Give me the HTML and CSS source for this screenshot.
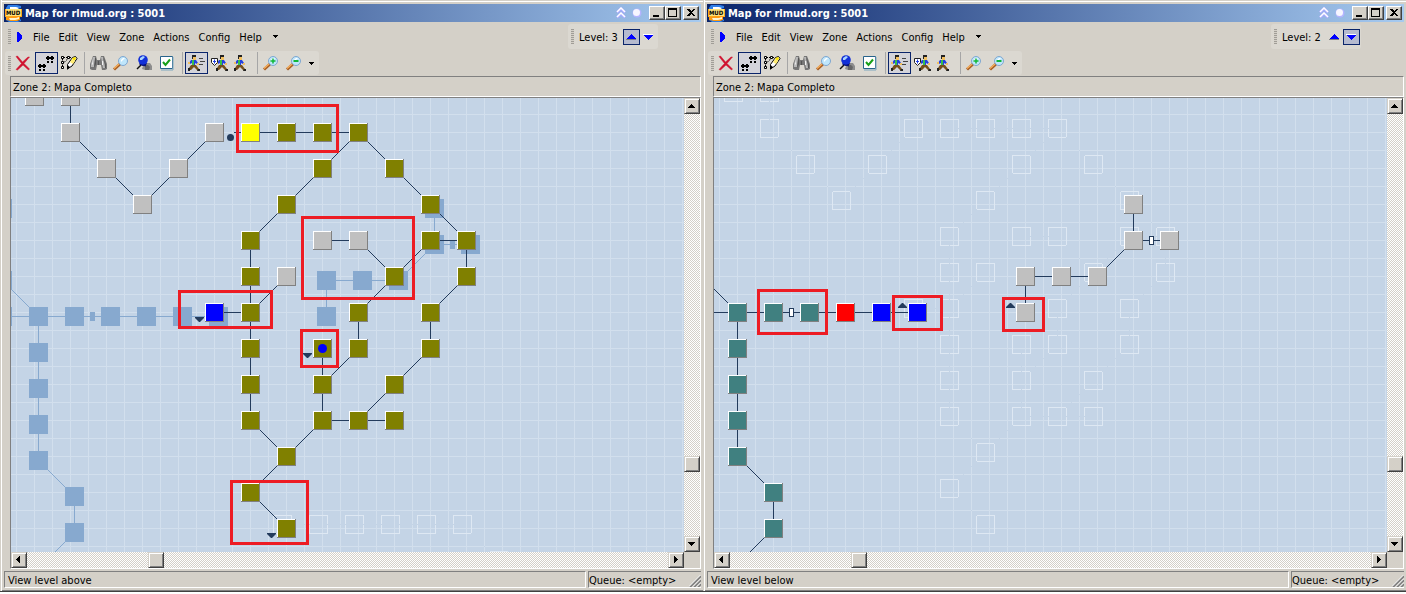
FILE: index.html
```html
<!DOCTYPE html>
<html lang="en">
<head>
<meta charset="utf-8">
<title>Map for rlmud.org : 5001</title>
<link rel="stylesheet" href="styles.css">
</head>
<body>
<svg class="sprites" aria-hidden="true">
  <symbol id="i-logo" viewBox="0 0 17 17">
    <path d="M3 0h9l4 1v2l-4 1H6L4 5H1V3z" fill="#2f7fe8"/>
    <path d="M5 2h6l3 1-3 2H5z" fill="#fff"/>
    <path d="M0 4h17v8H0z" fill="#f9a81a"/>
    <path d="M1 4h15v7H1z" fill="#ffe27a"/>
    <path d="M1 12h4l2-1h8v4l-3 1H4l-3-1z" fill="#ff9c12"/>
    <path d="M4 13h7l3-1v2l-4 1H5z" fill="#fff3d0"/>
    <path d="M1 15l5 1h8l2-2v2l-3 1H4z" fill="#2f7fe8"/>
  </symbol>
  <symbol id="i-delete" viewBox="0 0 16 16">
    <path d="M1 1.500l1.500-.5L7.500 7 13 2l1.500 0L9 8.500l5.500 5.500-1 1L8 10l-5.500 5-1.500-.5L6.500 8.500z" fill="#d0122f" stroke="#d0122f" stroke-width=".5"/>
  </symbol>
  <symbol id="i-feet" viewBox="0 0 16 16">
    <path d="M9 1h2v1h1v2h-1v1H9V4H8V2h1zM13 1h2v1h1v2h-1v1h-2V4h-1V2h1zM9 6h2v2H9zM13 6h2v2h-2z"/>
    <path d="M1 9h2v1h1v2H3v1H1v-1H0v-2h1zM5 9h2v1h1v2H7v1H5v-1H4v-2h1zM1 14h2v2H1zM5 14h2v2H5z"/>
  </symbol>
  <symbol id="i-edit" viewBox="0 0 17 16">
    <path d="M1.500 3.500v10M2 2.500h9M6.500 4l-5 5" stroke="#000" stroke-dasharray="2 1" fill="none"/>
    <path d="M.5 1.500h2v2h-2zM6.500 1.500h2v2h-2zM.5 6.500h2v2h-2zM.5 11.500h2v2h-2z" fill="#fff" stroke="#000"/>
    <path d="M6.500 9.500l5-7 3-1 1.500 2-5 7.500-4 2.500z" fill="#fff" stroke="#000"/>
    <path d="M11 3.500l1.500-1 2-.5.5 2-2 2z" fill="#ffe600"/>
    <path d="M9 7l2-3 3 2-2 3z" fill="#ffec70"/>
    <path d="M6 10l3 2-3 3z" fill="#000"/>
  </symbol>
  <symbol id="i-find" viewBox="0 0 17 16">
    <path d="M3 1h3l1 4h3l1-4h3l3 8v5l-2 1h-3l-1-5H7l-1 5H2l-2-1V9z" fill="#777"/>
    <path d="M3 2h2v3L4 12H1V9zM11 2h2v3l2 4v4h-2z" fill="#b8b8b8"/>
    <path d="M5 3h1v6l-2 4zM14 3l2 7v3h-1zM8 6h1v4H8z" fill="#555"/>
    <path d="M2 9l1-4v5zM12 6h1v4h-1z" fill="#f0f0f0"/>
  </symbol>
  <symbol id="i-search" viewBox="0 0 16 16">
    <path d="M7 9l-6 5.500" stroke="#a85c20" stroke-width="3"/>
    <path d="M6 9l-5 4.500" stroke="#f4b060" stroke-width="1.500"/>
    <circle cx="10" cy="6" r="4.500" fill="#bfe6fb" stroke="#7ea6d0"/>
    <path d="M8 5l2-2h2l-4 4z" fill="#fff"/>
  </symbol>
  <symbol id="i-pin" viewBox="0 0 16 16">
    <path d="M7 11l3-3h4l2 3v4H9l-3-1z" fill="#8d8d8d"/><path d="M9 10h3l2 2-1 3H9z" fill="#666"/>
    <path d="M5 10l-4 4" stroke="#111" stroke-width="1.500"/>
    <path d="M4 8l6 2" stroke="#061078" stroke-width="3"/>
    <circle cx="7" cy="5" r="4.800" fill="#1230d8"/>
    <path d="M3 8q4 4 8 0l-1 2-3 1-3-1z" fill="#061078"/>
    <path d="M4 3l3-2 2 1-3 3H4z" fill="#a8d4ff"/>
  </symbol>
  <symbol id="i-check" viewBox="0 0 16 16">
    <path d="M1.500 1.500h12v12h-12z" fill="#fff" stroke="#27638b"/>
    <path d="M14 2v13H2" stroke="#7fa8c0" fill="none"/>
    <path d="M4 7l2.500 3L11 4.500" stroke="#18a018" stroke-width="2" fill="none"/>
  </symbol>
  <symbol id="i-runner" viewBox="0 0 12 16">
    <path d="M4 1h4v4H5z" fill="#f2c060"/><path d="M4 0h4v2H5v2H4z" fill="#222"/>
    <path d="M3 5h5l2 3-1 1-2-1v3H4V8L2 9 1 8z" fill="#2340e0"/>
    <path d="M4 5h2v5H4z" fill="#35c04a"/><path d="M0 7h2v2H0zM9 8h2v2H9z" fill="#f2c060"/>
    <path d="M3 10h5l3 4-1 2-4-4-3 3H1v-2z" fill="#75501c"/>
    <path d="M0 13h2v3H0zM10 14h2v2h-3z" fill="#222"/>
  </symbol>
  <symbol id="i-run-fast" viewBox="0 0 17 16">
    <use href="#i-runner" width="12" height="16"/>
    <path d="M11 3.500h4M12 6.500h5M11 9.500h4" stroke="#444"/>
  </symbol>
  <symbol id="i-run-safe" viewBox="0 0 17 16">
    <use href="#i-runner" x="5" width="12" height="16"/>
    <path d="M.5 3.500h6v4l-3 3-3-3z" fill="#fff" stroke="#222"/>
    <path d="M3.500 4.500v4M2 6.500h3" stroke="#2340e0"/>
  </symbol>
  <symbol id="i-zoom-in" viewBox="0 0 16 16">
    <use href="#i-search" width="16" height="16"/><path d="M7.500 6h5M10 3.500v5" stroke="#10b838" stroke-width="1.500"/>
  </symbol>
  <symbol id="i-zoom-out" viewBox="0 0 16 16">
    <use href="#i-search" width="16" height="16"/><path d="M7.500 6h5" stroke="#10b838" stroke-width="2"/>
  </symbol>
  <symbol id="i-play" viewBox="0 0 6 10"><path d="M0 0h1l4 4v2L1 10H0z" fill="#00f"/><path d="M1 10l4-4 1-1-5 5z" fill="#808080"/></symbol>
  <symbol id="i-more" viewBox="0 0 5 3"><path d="M0 0h5L2.500 3z"/></symbol>
  <symbol id="i-level-up" viewBox="0 0 10 6"><path d="M5 0l5 5v1H0V5z" fill="#00f"/><path d="M0 5.500h10" stroke="#808080"/></symbol>
  <symbol id="i-level-down" viewBox="0 0 10 6"><path d="M0 0h10v1L5 6 0 1z" fill="#00f"/><path d="M0 .5h10" stroke="#fff"/></symbol>
  <symbol id="i-rollup" viewBox="0 0 10 12"><path d="M1 5.500l4-4 4 4M1 10.500l4-4 4 4" stroke="#a9a9ff" stroke-width="3" fill="none"/><path d="M1 5l4-4 4 4M1 10l4-4 4 4" stroke="#fff" stroke-width="1.500" fill="none"/></symbol>
  <symbol id="i-dot" viewBox="0 0 10 10"><circle cx="5" cy="5" r="4.500" fill="#b4b4ff"/><circle cx="4.500" cy="4.500" r="3.500" fill="#f6f6ff"/></symbol>
  <symbol id="i-min" viewBox="0 0 12 10"><path d="M2 7h6v2H2z"/></symbol>
  <symbol id="i-max" viewBox="0 0 12 10"><path d="M1 0h9v9H1zM2 2v6h7V2z" fill-rule="evenodd"/></symbol>
  <symbol id="i-close" viewBox="0 0 12 10"><path d="M2 1h2l2 2 2-2h2L7 4.500 10 8H8L6 6 4 8H2l3-3.500z"/></symbol>
  <symbol id="i-up" viewBox="0 0 8 8"><path d="M0 6h7L3.500 2z"/></symbol>
  <symbol id="i-down" viewBox="0 0 8 8"><path d="M0 2h7L3.500 6z"/></symbol>
  <symbol id="i-left" viewBox="0 0 8 8"><path d="M5 0v7L1 3.500z"/></symbol>
  <symbol id="i-right" viewBox="0 0 8 8"><path d="M2 0v7l4-3.500z"/></symbol>
  <symbol id="i-grip" viewBox="0 0 12 12"><path d="M1 12L12 1M5 12l7-7M9 12l3-3" stroke="#808080" stroke-width="2"/><path d="M0 11.500L11.500 0M4 11.500L12 3.500M8 11.500l4-4" stroke="#fff"/></symbol>
</svg>

<main class="desktop">
  <section class="window">
    <header class="titlebar">
      <svg class="logo"><use href="#i-logo"/><text x="8" y="10" text-anchor="middle" class="logo-text">MUD</text></svg>
      <h2 class="title">Map for rlmud.org : 5001</h2>
      <button class="caption-ghost" aria-label="Roll up"><svg width="10" height="12"><use href="#i-rollup"/></svg></button>
      <button class="caption-ghost" aria-label="Stay on top"><svg width="10" height="10"><use href="#i-dot"/></svg></button>
      <div class="caption-group">
        <button class="caption" aria-label="Minimize"><svg><use href="#i-min"/></svg></button>
        <button class="caption" aria-label="Maximize"><svg><use href="#i-max"/></svg></button>
      </div>
      <button class="caption" aria-label="Close"><svg><use href="#i-close"/></svg></button>
    </header>
    <div class="menurow">
      <nav class="menu">
        <span class="handle"></span>
        <button class="menu-play" aria-label="Run"><svg width="6" height="10"><use href="#i-play"/></svg></button>
        <button class="menu-item">File</button>
        <button class="menu-item">Edit</button>
        <button class="menu-item">View</button>
        <button class="menu-item">Zone</button>
        <button class="menu-item">Actions</button>
        <button class="menu-item">Config</button>
        <button class="menu-item">Help</button>
        <button class="menu-more" aria-label="More menus"><svg width="5" height="3"><use href="#i-more"/></svg></button>
      </nav>
      <div class="level">
        <span class="handle"></span>
        <span class="level-label">Level: 3</span>
        <button class="level-btn pressed" aria-label="Level up"><svg width="10" height="6"><use href="#i-level-up"/></svg></button>
        <button class="level-btn" aria-label="Level down"><svg width="10" height="6"><use href="#i-level-down"/></svg></button>
      </div>
    </div>
    <div class="toolbar">
      <span class="handle"></span>
      <button class="tool" aria-label="Delete"><svg width="16" height="16"><use href="#i-delete"/></svg></button>
      <button class="tool pressed" aria-label="Follow"><svg width="16" height="16"><use href="#i-feet"/></svg></button>
      <button class="tool" aria-label="Edit map"><svg width="17" height="16"><use href="#i-edit"/></svg></button>
      <span class="sep"></span>
      <button class="tool" aria-label="Find"><svg width="17" height="16"><use href="#i-find"/></svg></button>
      <button class="tool" aria-label="Search"><svg width="16" height="16"><use href="#i-search"/></svg></button>
      <button class="tool" aria-label="Pin"><svg width="16" height="16"><use href="#i-pin"/></svg></button>
      <button class="tool" aria-label="Options"><svg width="16" height="16"><use href="#i-check"/></svg></button>
      <span class="sep"></span>
      <button class="tool pressed" aria-label="Fast walk"><svg width="17" height="16"><use href="#i-run-fast"/></svg></button>
      <button class="tool" aria-label="Safe walk"><svg width="17" height="16"><use href="#i-run-safe"/></svg></button>
      <button class="tool" aria-label="Slow walk"><svg width="12" height="16"><use href="#i-runner"/></svg></button>
      <span class="sep"></span>
      <button class="tool" aria-label="Zoom in"><svg width="16" height="16"><use href="#i-zoom-in"/></svg></button>
      <button class="tool" aria-label="Zoom out"><svg width="16" height="16"><use href="#i-zoom-out"/></svg></button>
      <button class="tool-more" aria-label="More tools"><svg width="5" height="3"><use href="#i-more"/></svg></button>
    </div>
    <div class="zone">Zone 2: Mapa Completo</div>
    <div class="viewport">
      <svg class="map" data-level="3"></svg>
      <div class="vscroll">
        <button class="scroll-btn" aria-label="Scroll up"><svg><use href="#i-up"/></svg></button>
        <span class="v-before"></span><span class="thumb"></span><span class="v-after"></span>
        <button class="scroll-btn" aria-label="Scroll down"><svg><use href="#i-down"/></svg></button>
      </div>
      <div class="hscroll">
        <button class="scroll-btn" aria-label="Scroll left"><svg><use href="#i-left"/></svg></button>
        <span class="h-before"></span><span class="thumb"></span><span class="h-after"></span>
        <button class="scroll-btn" aria-label="Scroll right"><svg><use href="#i-right"/></svg></button>
      </div>
    </div>
    <footer class="status">
      <div class="status-main">View level above</div>
      <div class="status-queue"><span>Queue: &lt;empty&gt;</span><svg width="12" height="12"><use href="#i-grip"/></svg></div>
    </footer>
  </section>

  <section class="window">
    <header class="titlebar">
      <svg class="logo"><use href="#i-logo"/><text x="8" y="10" text-anchor="middle" class="logo-text">MUD</text></svg>
      <h2 class="title">Map for rlmud.org : 5001</h2>
      <button class="caption-ghost" aria-label="Roll up"><svg width="10" height="12"><use href="#i-rollup"/></svg></button>
      <button class="caption-ghost" aria-label="Stay on top"><svg width="10" height="10"><use href="#i-dot"/></svg></button>
      <div class="caption-group">
        <button class="caption" aria-label="Minimize"><svg><use href="#i-min"/></svg></button>
        <button class="caption" aria-label="Maximize"><svg><use href="#i-max"/></svg></button>
      </div>
      <button class="caption" aria-label="Close"><svg><use href="#i-close"/></svg></button>
    </header>
    <div class="menurow">
      <nav class="menu">
        <span class="handle"></span>
        <button class="menu-play" aria-label="Run"><svg width="6" height="10"><use href="#i-play"/></svg></button>
        <button class="menu-item">File</button>
        <button class="menu-item">Edit</button>
        <button class="menu-item">View</button>
        <button class="menu-item">Zone</button>
        <button class="menu-item">Actions</button>
        <button class="menu-item">Config</button>
        <button class="menu-item">Help</button>
        <button class="menu-more" aria-label="More menus"><svg width="5" height="3"><use href="#i-more"/></svg></button>
      </nav>
      <div class="level">
        <span class="handle"></span>
        <span class="level-label">Level: 2</span>
        <button class="level-btn" aria-label="Level up"><svg width="10" height="6"><use href="#i-level-up"/></svg></button>
        <button class="level-btn pressed" aria-label="Level down"><svg width="10" height="6"><use href="#i-level-down"/></svg></button>
      </div>
    </div>
    <div class="toolbar">
      <span class="handle"></span>
      <button class="tool" aria-label="Delete"><svg width="16" height="16"><use href="#i-delete"/></svg></button>
      <button class="tool pressed" aria-label="Follow"><svg width="16" height="16"><use href="#i-feet"/></svg></button>
      <button class="tool" aria-label="Edit map"><svg width="17" height="16"><use href="#i-edit"/></svg></button>
      <span class="sep"></span>
      <button class="tool" aria-label="Find"><svg width="17" height="16"><use href="#i-find"/></svg></button>
      <button class="tool" aria-label="Search"><svg width="16" height="16"><use href="#i-search"/></svg></button>
      <button class="tool" aria-label="Pin"><svg width="16" height="16"><use href="#i-pin"/></svg></button>
      <button class="tool" aria-label="Options"><svg width="16" height="16"><use href="#i-check"/></svg></button>
      <span class="sep"></span>
      <button class="tool pressed" aria-label="Fast walk"><svg width="17" height="16"><use href="#i-run-fast"/></svg></button>
      <button class="tool" aria-label="Safe walk"><svg width="17" height="16"><use href="#i-run-safe"/></svg></button>
      <button class="tool" aria-label="Slow walk"><svg width="12" height="16"><use href="#i-runner"/></svg></button>
      <span class="sep"></span>
      <button class="tool" aria-label="Zoom in"><svg width="16" height="16"><use href="#i-zoom-in"/></svg></button>
      <button class="tool" aria-label="Zoom out"><svg width="16" height="16"><use href="#i-zoom-out"/></svg></button>
      <button class="tool-more" aria-label="More tools"><svg width="5" height="3"><use href="#i-more"/></svg></button>
    </div>
    <div class="zone">Zone 2: Mapa Completo</div>
    <div class="viewport">
      <svg class="map" data-level="2"></svg>
      <div class="vscroll">
        <button class="scroll-btn" aria-label="Scroll up"><svg><use href="#i-up"/></svg></button>
        <span class="v-before"></span><span class="thumb"></span><span class="v-after"></span>
        <button class="scroll-btn" aria-label="Scroll down"><svg><use href="#i-down"/></svg></button>
      </div>
      <div class="hscroll">
        <button class="scroll-btn" aria-label="Scroll left"><svg><use href="#i-left"/></svg></button>
        <span class="h-before"></span><span class="thumb"></span><span class="h-after"></span>
        <button class="scroll-btn" aria-label="Scroll right"><svg><use href="#i-right"/></svg></button>
      </div>
    </div>
    <footer class="status">
      <div class="status-main">View level below</div>
      <div class="status-queue"><span>Queue: &lt;empty&gt;</span><svg width="12" height="12"><use href="#i-grip"/></svg></div>
    </footer>
  </section>
</main>
<script src="map.js"></script>
</body>
</html>
```

FILE: styles.css
```css
* { box-sizing: border-box; }

body {
  margin: 0;
  background: #fff;
  color: #000;
  font: 11px/14px "DejaVu Sans Condensed", "DejaVu Sans", sans-serif;
}

button {
  display: flex;
  align-items: center;
  justify-content: center;
  margin: 0;
  padding: 0;
  border: 0;
  background: none;
  color: inherit;
  font: inherit;
}

svg { display: block; flex: none; }
.sprites { position: absolute; width: 0; height: 0; }
.logo-text { font: bold 6px "DejaVu Sans Condensed", sans-serif; }

.desktop {
  display: flex;
  height: 100vh;
  min-height: 300px;
  padding-bottom: 2px;
}

.window {
  flex: 1;
  min-width: 0;
  display: flex;
  flex-direction: column;
  padding: 4px 2px 3px 4px;
  background: #d4d0c8;
  border-bottom: 1px solid #404040;
  box-shadow: inset 1px 0 #d4d0c8, inset 2px 0 #fff, inset 0 1px #d4d0c8, inset 0 2px #fff, inset 0 -1px #808080;
}

/* Title bar */
.titlebar {
  display: flex;
  align-items: center;
  height: 18px;
  padding: 0 2px 0 1px;
  background: linear-gradient(to right, #0a246a, #a6caf0);
}
.logo { width: 17px; height: 17px; }
.title {
  flex: 1;
  margin: 0;
  padding: 1px 0 0 3px;
  color: #fff;
  font-size: 11px;
  font-weight: bold;
  white-space: nowrap;
}
.caption-ghost { width: 16px; height: 14px; }
.caption-group { display: flex; margin: 0 2px 0 4px; }
.caption {
  width: 16px;
  height: 14px;
  background: #d4d0c8;
  border: 1px solid;
  border-color: #fff #404040 #404040 #fff;
  box-shadow: inset -1px -1px #808080;
}
.caption svg { width: 12px; height: 10px; shape-rendering: crispEdges; }

/* Menu and level bars */
.menurow { display: flex; justify-content: space-between; padding: 2px 43px 2px 1px; }
.menu, .level { display: flex; align-items: center; height: 25px; padding-left: 3px; }
.handle {
  flex: none;
  width: 3px;
  height: 15px;
  background: repeating-linear-gradient(#a09d97 0 1px, #d4d0c8 1px 2px);
}
.menu-play { width: 17px; height: 20px; }
.menu-item { height: 21px; padding: 2px 4px 0 5px; }
.menu-more { width: 20px; height: 20px; }
.level { width: 90px; border-radius: 3px; background: #dbd8d1; }
.level-label { flex: 1; padding: 2px 0 0 5px; white-space: nowrap; }
.level-btn { justify-content: flex-start; width: 17px; height: 16px; padding: 0 3px; }
.level-btn:last-child { margin-right: 1px; }
.level svg, .menu svg, .tool-more svg { shape-rendering: crispEdges; }

/* Toolbar */
.toolbar {
  display: flex;
  align-items: center;
  align-self: flex-start;
  height: 24px;
  margin: 0 0 1px 1px;
  padding: 0 3px;
  border-radius: 3px;
  background: #dbd8d1;
}
.toolbar .handle { margin-right: 1px; }
.tool { justify-content: flex-start; width: 23px; height: 22px; padding: 0 3px; }
.tool-more { width: 10px; height: 22px; }
.sep { width: 1px; height: 22px; margin: 0 2px 0 3px; background: #a6a6a6; }
.pressed { padding: 0 2px; background: #b5bacf; border: 1px solid #0a246a; }
.tool.pressed { background: #d3d3da; }

/* Zone caption and map */
.zone {
  height: 21px;
  margin-left: 6px;
  padding: 4px 2px 0;
  border: 1px solid;
  border-color: #808080 #fff #fff #808080;
}
.viewport {
  flex: 1;
  min-height: 0;
  display: grid;
  grid-template: minmax(0, 1fr) 16px / minmax(0, 1fr) 16px;
  margin-left: 6px;
  border: 1px solid;
  border-color: #808080 #fff #fff #808080;
}
.map {
  width: 100%;
  height: 100%;
  overflow: hidden;
  background-color: #c4d4e6;
  background-image:
    linear-gradient(to right, #d2dfed 1px, transparent 1px),
    linear-gradient(#d2dfed 1px, transparent 1px);
  background-size: 18px 18px;
  background-position: 5px 0, 0 16px;
}
.square { shape-rendering: crispEdges; }
.link { stroke: #233b5c; shape-rendering: crispEdges; }
.link.below { stroke: #87a9cf; }
.link.above { stroke: #c4d4e6; }
.mark { fill: #233b5c; }
.player { fill: #00f; }
.note { fill: none; stroke: #ed1c24; stroke-width: 3; shape-rendering: crispEdges; }

/* Scroll bars */
.vscroll, .hscroll {
  display: flex;
  background: conic-gradient(#fff 25%, #d4d0c8 0 50%, #fff 0 75%, #d4d0c8 0) 0 0 / 2px 2px;
}
.vscroll { flex-direction: column; }
.scroll-btn, .thumb {
  flex: none;
  width: 16px;
  height: 16px;
  background: #d4d0c8;
  border: 1px solid;
  border-color: #d4d0c8 #404040 #404040 #d4d0c8;
  box-shadow: inset 1px 1px #fff, inset -1px -1px #808080;
}
.scroll-btn svg { width: 8px; height: 8px; shape-rendering: crispEdges; }
.v-before { flex: 342; }
.v-after { flex: 64; }
.h-before { flex: 121; }
.h-after { flex: 504; }

/* Status bar */
.status { display: flex; gap: 2px; margin-top: 2px; }
.status-main, .status-queue {
  height: 17px;
  padding: 2px 3px 0;
  border: 1px solid;
  border-color: #808080 #fff #fff #808080;
  line-height: 13px;
  white-space: nowrap;
}
.status-main { flex: 1; }
.status-queue { display: flex; justify-content: space-between; width: 113px; padding: 2px 0 0; border-right: 0; }
.status-queue svg { align-self: flex-end; }
```

FILE: map.js
```js
const STEP = 36, SIZE = 19, ORIGIN_X = 14, ORIGIN_Y = 25;

const COLORS = {
  gray: '#c0c0c0', olive: '#808000', yellow: '#ffff00',
  blue: '#0000ff', teal: '#408080', red: '#ff0000'
};

// Rooms are [column, row] pairs; a path is a chain of linked rooms.
const LEVELS = {
  3: {
    rooms: {
      gray: [[0,-1],[1,-1],[1,0],[2,1],[3,2],[4,1],[5,0],[8,3],[9,3],[7,4]],
      yellow: [[6,0]],
      blue: [[5,5]],
      olive: [[7,0],[8,0],[9,0],[8,1],[10,1],[7,2],[11,2],[6,3],[11,3],[12,3],[6,4],[10,4],[12,4],
        [6,5],[9,5],[11,5],[6,6],[8,6],[9,6],[11,6],[6,7],[8,7],[10,7],[6,8],[8,8],[9,8],[10,8],
        [7,9],[6,10],[7,11]]
    },
    paths: [
      [[1,-1],[1,0],[2,1],[3,2],[4,1],[5,0]],
      [[6,0],[7,0],[8,0],[9,0],[8,1],[7,2],[6,3],[6,4],[6,5],[6,6],[6,7],[6,8],[7,9],[6,10],[7,11]],
      [[9,0],[10,1],[11,2],[12,3],[12,4],[11,5],[11,6],[10,7],[9,8]],
      [[8,3],[9,3],[10,4],[11,3],[12,3]],
      [[10,4],[9,5],[9,6],[8,7],[8,8],[7,9]],
      [[8,6],[8,7]], [[8,8],[9,8],[10,8]], [[5,5],[6,5],[7,4]]
    ],
    doors: [],
    down: [[5,5],[8,6],[7,11]], up: [],
    notes: [[225,6,103,49],[290,118,114,84],[167,192,95,39],[289,231,39,39],[219,382,79,65]]
  },
  2: {
    rooms: {
      teal: [[-1,2],[-1,4],[-1,5],[0,5],[1,5],[2,5],[0,6],[0,7],[0,8],[0,9],[1,10],[1,11]],
      red: [[3,5]],
      blue: [[4,5],[5,5]],
      gray: [[8,5],[8,4],[9,4],[10,4],[11,3],[11,2],[12,3]]
    },
    paths: [
      [[-1,5],[0,5],[1,5],[2,5],[3,5],[4,5],[5,5]],
      [[-1,4],[0,5],[0,6],[0,7],[0,8],[0,9],[1,10],[1,11],[0,12]],
      [[8,5],[8,4],[9,4],[10,4],[11,3],[12,3]], [[11,3],[11,2]]
    ],
    doors: [[1,5],[11,3]],
    down: [], up: [[5,5],[8,5]],
    notes: [[43,191,71,46],[178,197,51,36],[288,199,43,35]]
  },
  4: {
    rooms: { gray: [[7,11],[8,11],[9,11],[10,11],[11,11],[12,11],[13,12]] },
    paths: [[[7,11],[8,11],[9,11],[10,11],[11,11],[12,11],[13,12]]],
    doors: []
  }
};

const px = (c, shift) => ORIGIN_X + STEP * c + shift;
const py = (r, shift) => ORIGIN_Y + STEP * r + shift;

function rect(x, y, w, h, fill, cls = 'square') {
  return `<rect class="${cls}" x="${x}" y="${y}" width="${w}" height="${h}" fill="${fill}"/>`;
}

function links(level, kind, shift) {
  const half = SIZE / 2;
  return level.paths.map(path => path.slice(1).map((to, i) => {
    const from = path[i];
    const inset = kind === 'above' ? half - 1 : 0;
    const dx = Math.sign(to[0] - from[0]) * inset, dy = Math.sign(to[1] - from[1]) * inset;
    return `<line class="link ${kind}" x1="${px(from[0], shift) + half + dx}" y1="${py(from[1], shift) + half + dy}"` +
      ` x2="${px(to[0], shift) + half - dx}" y2="${py(to[1], shift) + half - dy}"/>`;
  }).join('')).join('');
}

function doors(level, shift, fill, edge) {
  return level.doors.map(([c, r]) => {
    const x = px(c, shift) + 25, y = py(r, shift) + 5;
    return rect(x, y, 5, 9, edge) + rect(x + 1, y + 1, 3, 7, fill);
  }).join('');
}

function eachRoom(level, draw) {
  return Object.entries(level.rooms).map(([name, rooms]) =>
    rooms.map(([c, r]) => draw(c, r, COLORS[name])).join('')).join('');
}

function drawMap(svg) {
  const id = Number(svg.dataset.level);
  const level = LEVELS[id], below = LEVELS[id - 1], above = LEVELS[id + 1];
  let out = '';
  if (below) {
    out += links(below, 'below', 4);
    out += eachRoom(below, (c, r) => rect(px(c, 4), py(r, 4), SIZE, SIZE, '#87a9cf'));
    out += doors(below, 4, '#87a9cf', '#87a9cf');
  }
  if (above) {
    out += eachRoom(above, (c, r) =>
      `<rect class="square" x="${px(c, -4) + 0.5}" y="${py(r, -4) + 0.5}" width="18" height="18" fill="none" stroke="#dee8f3"/>`);
    out += links(above, 'above', -4);
  }
  out += links(level, 'current', 0);
  out += doors(level, 0, '#fff', '#233b5c');
  out += eachRoom(level, (c, r, color) => {
    const x = px(c, 0), y = py(r, 0);
    return rect(x, y, SIZE, SIZE, '#808080') + rect(x, y, 18, 18, '#fff') + rect(x + 1, y + 1, 17, 17, color);
  });
  level.down.forEach(([c, r]) => {
    const x = px(c, 0) - 10, y = py(r, 0) + 14;
    out += `<path class="mark" d="M${x} ${y}h9v1l-4 4h-1l-4-4z"/>`;
  });
  level.up.forEach(([c, r]) => {
    const x = px(c, 0) - 10, y = py(r, 0);
    out += `<path class="mark" d="M${x} ${y + 5}h9v-1l-4-4h-1l-4 4z"/>`;
  });
  if (id === 3) {
    out += '<line class="link" x1="223" y1="34.5" x2="230" y2="34.5"/>';
    out += '<circle class="mark" cx="219.5" cy="39.5" r="3.5"/>';
    out += `<circle class="player" cx="${px(8, 9.5)}" cy="${py(6, 9.5)}" r="4.5"/>`;
  }
  level.notes.forEach(([x, y, w, h]) => {
    out += `<rect class="note" x="${x + 1.5}" y="${y + 1.5}" width="${w - 3}" height="${h - 3}"/>`;
  });
  svg.innerHTML = out;
}

document.querySelectorAll('.map').forEach(drawMap);
```
